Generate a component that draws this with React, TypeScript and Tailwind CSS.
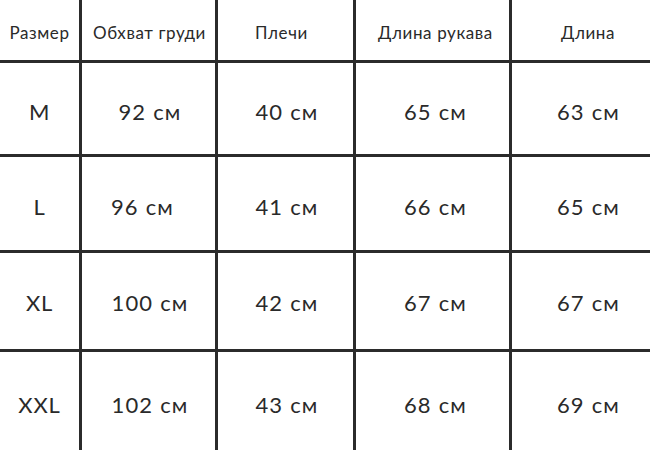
const headers = [
  { label: 'Размер', pad: '' },
  { label: 'Обхват груди', pad: 'pl-[2px]' },
  { label: 'Плечи', pad: 'pr-[8px]' },
  { label: 'Длина рукава', pad: 'pl-[6px]' },
  { label: 'Длина', pad: 'pl-[14px]' },
]

// horizontal nudges per value column, as in the source image
const valuePads = ['pl-[3px]', 'pl-[3px]', 'pl-[6px]', 'pl-[15px]']

const rows = [
  { size: 'M', values: ['92 см', '40 см', '65 см', '63 см'], h: 'h-[91px] pt-[6px]' },
  { size: 'L', values: ['96 см', '41 см', '66 см', '65 см'], h: 'h-[93px] pt-[6px]' },
  { size: 'XL', values: ['100 см', '42 см', '67 см', '67 см'], h: 'h-[96px] pt-[2px]' },
  { size: 'XXL', values: ['102 см', '43 см', '68 см', '69 см'], h: 'h-[98px] pt-[7px]' },
]

export default function App() {
  return (
    <div className="w-[650px] h-[450px] overflow-hidden bg-white font-['Lato',sans-serif] text-[#2a2a2a]">
      <div className="grid grid-cols-[79px_133px_135px_153px_138px] gap-[3px] bg-[#2b2b2b]">
        {headers.map((h) => (
          <div
            key={h.label}
            className={`h-[60px] bg-white flex items-center justify-center text-[17px] tracking-[0.6px] pt-[6px] whitespace-nowrap ${h.pad}`}
          >
            {h.label}
          </div>
        ))}
        {rows.map((row) => (
          <Row key={row.size} size={row.size} values={row.values} h={row.h} />
        ))}
      </div>
    </div>
  )
}

function Row({ size, values, h }: { size: string; values: string[]; h: string }) {
  return (
    <>
      <div className={`${h} bg-white flex items-center justify-center text-[22px] tracking-[0.8px]`}>{size}</div>
      {values.map((value, i) => (
        <div
          key={i}
          className={`${h} bg-white flex items-center justify-center text-[22px] tracking-[1.2px] ${
            value === '96 см' ? 'pr-[12px]' : valuePads[i]
          }`}
        >
          {value}
        </div>
      ))}
    </>
  )
}
